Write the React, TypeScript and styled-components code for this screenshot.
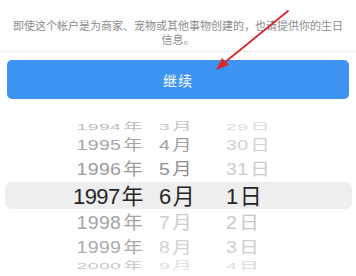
import React from 'react';
import styled, { createGlobalStyle } from 'styled-components';

const GlobalStyle = createGlobalStyle`
  html, body {
    margin: 0;
    padding: 0;
    background: #ffffff;
  }
  body {
    font-family: "Liberation Sans", "Noto Sans CJK SC", sans-serif;
  }
`;

const Page = styled.div`
  position: relative;
  width: 356px;
  height: 276px;
  overflow: hidden;
  background: #fff;
`;

const Notice = styled.p`
  margin: 0;
  padding: 19px 6px 0;
  text-align: center;
  white-space: nowrap;
  font-family: "Noto Sans CJK SC", sans-serif;
  font-size: 11px;
  line-height: 13.5px;
  color: #8c8c8c;
`;

const Divider = styled.div`
  height: 1px;
  margin-top: 5px;
  background: #ececec;
`;

const ContinueButton = styled.button`
  display: block;
  width: calc(100% - 14px);
  height: 39px;
  margin: 8px 7px 0;
  border: none;
  border-radius: 5px;
  background: #3d94f3;
  color: #fff;
  font-family: "Noto Sans CJK SC", sans-serif;
  font-size: 14px;
  letter-spacing: 1px;
`;

const Picker = styled.div`
  display: flex;
  flex-direction: column;
  margin-top: 17px;
`;

const Row = styled.div<{ $h: number; $selected?: boolean }>`
  display: grid;
  grid-template-columns: 138px 51px 1fr;
  column-gap: 16px;
  align-items: center;
  height: ${p => p.$h}px;
  margin: 0 4px 0 5px;
  border-radius: ${p => (p.$selected ? '7px' : '0')};
  background: ${p => (p.$selected ? '#eeeeef' : 'transparent')};
`;

const Cell = styled.span<{ $color: string; $scale: number; $selected?: boolean; $align?: string }>`
  display: block;
  text-align: ${p => p.$align || 'left'};
  white-space: nowrap;
  font-family: "Liberation Sans", "Noto Sans CJK SC", sans-serif;
  font-size: ${p => (p.$selected ? '22px' : '19.5px')};
  line-height: 1;
  letter-spacing: ${p => (p.$selected ? '-0.6px' : '0.3px')};
  color: ${p => p.$color};
  transform: scaleY(${p => p.$scale});
`;

const Han = styled.span`
  font-family: "Noto Sans CJK SC", sans-serif;
  margin-left: 2px;
`;

const ArrowLayer = styled.svg`
  position: absolute;
  left: 0;
  top: 0;
  pointer-events: none;
`;

type PickerRow = {
  h: number;
  scale: number;
  year: string;
  month: string;
  day: string;
  colors: [string, string, string];
  selected?: boolean;
};

const rows: PickerRow[] = [
  { h: 18, scale: 0.5, year: '1994', month: '3', day: '29', colors: ['#bdbdbd', '#c4c4c4', '#dddddd'] },
  { h: 21, scale: 0.78, year: '1995', month: '4', day: '30', colors: ['#a6a6a6', '#a0a0a0', '#d2d2d2'] },
  { h: 27, scale: 0.88, year: '1996', month: '5', day: '31', colors: ['#9c9c9c', '#8f8f8f', '#cccccc'] },
  { h: 27, scale: 1, year: '1997', month: '6', day: '1', colors: ['#262626', '#262626', '#262626'], selected: true },
  { h: 27, scale: 0.92, year: '1998', month: '7', day: '2', colors: ['#a4a4a4', '#cdcdcd', '#c8c8c8'] },
  { h: 19, scale: 0.82, year: '1999', month: '8', day: '3', colors: ['#acacac', '#d2d2d2', '#cdcdcd'] },
  { h: 15, scale: 0.5, year: '2000', month: '9', day: '4', colors: ['#c8c8c8', '#dedede', '#dadada'] },
];

export default function App() {
  return (
    <Page>
      <GlobalStyle />
      <Notice>
        即使这个帐户是为商家、宠物或其他事物创建的，也请提供你的生日
        <br />
        信息。
      </Notice>
      <Divider />
      <ContinueButton>继续</ContinueButton>
      <Picker>
        {rows.map(r => (
          <Row key={r.year} $h={r.h} $selected={r.selected}>
            <Cell $color={r.colors[0]} $scale={r.scale} $selected={r.selected} $align="right">
              {r.year}
              <Han>年</Han>
            </Cell>
            <Cell $color={r.colors[1]} $scale={r.scale} $selected={r.selected}>
              {r.month}
              <Han>月</Han>
            </Cell>
            <Cell $color={r.colors[2]} $scale={r.scale} $selected={r.selected}>
              {r.day}
              <Han>日</Han>
            </Cell>
          </Row>
        ))}
      </Picker>
      <ArrowLayer width="356" height="276" viewBox="0 0 356 276">
        <line x1="288" y1="11" x2="224" y2="63" stroke="#d8282c" strokeWidth="1.8" strokeLinecap="round" />
        <polygon points="216,70 222,58 229,65" fill="#d8282c" />
      </ArrowLayer>
    </Page>
  );
}
